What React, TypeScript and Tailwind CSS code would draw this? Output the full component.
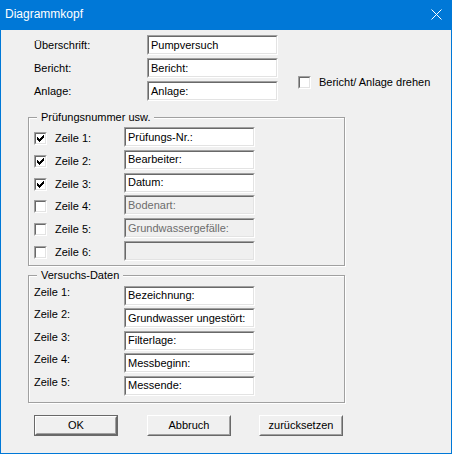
import React from 'react';

const Check = () => (
  <svg width="7" height="7" viewBox="0 0 7 7" shapeRendering="crispEdges">
    {[2, 3, 4, 3, 2, 1, 0].map((y, x) => (
      <rect key={x} x={x} y={y} width="1" height="3" fill="#000" />
    ))}
  </svg>
);

const CheckBox = ({ checked = false }: { checked?: boolean }) => (
  <div className="w-[13px] h-[13px] shrink-0 border border-t-[#a0a0a0] border-l-[#a0a0a0] border-r-white border-b-white">
    <div className="w-full h-full bg-white border border-t-[#696969] border-l-[#696969] border-r-[#e3e3e3] border-b-[#e3e3e3] flex items-center justify-center">
      {checked && <Check />}
    </div>
  </div>
);

const Field = ({ value = '', disabled = false }: { value?: string; disabled?: boolean }) => (
  <div className="w-[131px] h-[20px] shrink-0 border border-t-[#a0a0a0] border-l-[#a0a0a0] border-r-white border-b-white">
    <div
      className={`h-full border border-t-[#696969] border-l-[#696969] border-r-[#e3e3e3] border-b-[#e3e3e3] flex items-center pl-[2px] ${
        disabled ? 'bg-[#f0f0f0] text-[#6d6d6d]' : 'bg-white text-black'
      }`}
    >
      <span className="leading-none whitespace-nowrap">{value}</span>
    </div>
  </div>
);

const Button = ({ label, primary = false, className = '' }: { label: string; primary?: boolean; className?: string }) => (
  <div className={`w-[84px] h-[21px] ${primary ? 'border border-[#696969]' : ''} ${className}`}>
    <div className="h-full border border-t-white border-l-white border-r-[#696969] border-b-[#696969]">
      <div className="h-full border border-t-[#f0f0f0] border-l-[#f0f0f0] border-r-[#a0a0a0] border-b-[#a0a0a0] bg-[#f0f0f0] flex items-center justify-center">
        <span className="leading-none">{label}</span>
      </div>
    </div>
  </div>
);

const Group = ({ title, className = '', children }: { title: string; className?: string; children: React.ReactNode }) => (
  <div className={`relative w-[317px] border border-[#a0a0a0] shadow-[inset_1px_1px_0_#fff,1px_1px_0_#fff] ${className}`}>
    <span className="absolute -top-[7px] left-[8px] px-[4px] bg-[#f0f0f0] leading-[13px]">{title}</span>
    {children}
  </div>
);

const pruefRows = [
  { label: 'Zeile 1:', value: 'Prüfungs-Nr.:', checked: true },
  { label: 'Zeile 2:', value: 'Bearbeiter:', checked: true },
  { label: 'Zeile 3:', value: 'Datum:', checked: true },
  { label: 'Zeile 4:', value: 'Bodenart:', checked: false },
  { label: 'Zeile 5:', value: 'Grundwassergefälle:', checked: false },
  { label: 'Zeile 6:', value: '', checked: false },
];

const versuchRows = [
  { label: 'Zeile 1:', value: 'Bezeichnung:' },
  { label: 'Zeile 2:', value: 'Grundwasser ungestört:' },
  { label: 'Zeile 3:', value: 'Filterlage:' },
  { label: 'Zeile 4:', value: 'Messbeginn:' },
  { label: 'Zeile 5:', value: 'Messende:' },
];

export default function App() {
  return (
    <div className="w-[452px] h-[454px] border border-[#0078d7] bg-[#f0f0f0] flex flex-col font-['Liberation_Sans',Arial,sans-serif] text-[11px] text-black">
      {/* Titelleiste */}
      <div className="h-[29px] shrink-0 bg-[#0078d7] flex items-center justify-between pl-[4px] pr-[9px]">
        <span className="text-white text-[12px] leading-none -mt-[3px]">Diagrammkopf</span>
        <svg width="11" height="11" viewBox="0 0 11 11" className="-mt-[3px]">
          <path d="M0.5 0.5 L10.5 10.5 M10.5 0.5 L0.5 10.5" stroke="#fff" strokeWidth="1" />
        </svg>
      </div>

      <div className="flex-1 pl-[27px] pt-[5px]">
        {/* Kopfzeilen */}
        <div className="flex ml-[6px]">
          <div className="flex flex-col gap-[3px]">
            {[
              ['Überschrift:', 'Pumpversuch'],
              ['Bericht:', 'Bericht:'],
              ['Anlage:', 'Anlage:'],
            ].map(([label, value]) => (
              <div key={label} className="flex items-center h-[20px]">
                <span className="w-[113px] leading-[13px]">{label}</span>
                <Field value={value} />
              </div>
            ))}
          </div>
          <div className="flex items-center ml-[20px] mt-[41px] h-[13px]">
            <CheckBox />
            <span className="ml-[8px] leading-[13px] whitespace-nowrap">Bericht/ Anlage drehen</span>
          </div>
        </div>

        {/* Prüfungsnummer */}
        <Group title="Prüfungsnummer usw." className="mt-[16px]">
          <div className="flex flex-col gap-[2.8px] pt-[9px] pb-[4px] pl-[5px]">
            {pruefRows.map((r) => (
              <div key={r.label} className="flex items-center h-[20px]">
                <div className="w-[90px] flex items-center pt-[3px]">
                  <CheckBox checked={r.checked} />
                  <span className="ml-[8px] leading-[13px]">{r.label}</span>
                </div>
                <Field value={r.value} disabled={!r.checked} />
              </div>
            ))}
          </div>
        </Group>

        {/* Versuchs-Daten */}
        <Group title="Versuchs-Daten" className="mt-[9px]">
          <div className="flex flex-col gap-[2.5px] pt-[10px] pb-[6px] pl-[5px]">
            {versuchRows.map((r) => (
              <div key={r.label} className="flex items-start h-[20px]">
                <span className="w-[90px] leading-[13px]">{r.label}</span>
                <Field value={r.value} />
              </div>
            ))}
          </div>
        </Group>

        {/* Schaltflächen */}
        <div className="flex mt-[12px] ml-[6px]">
          <Button label="OK" primary />
          <Button label="Abbruch" className="ml-[29px]" />
          <Button label="zurücksetzen" className="ml-[28px]" />
        </div>
      </div>
    </div>
  );
}
